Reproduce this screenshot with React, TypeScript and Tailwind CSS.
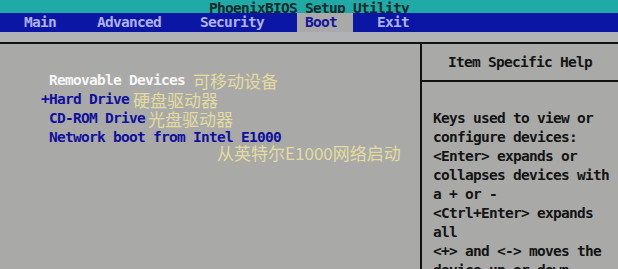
const tabs = [
  { label: "Main", className: "ml-[24px]" },
  { label: "Advanced", className: "ml-[41px]" },
  { label: "Security", className: "ml-[39px]" },
]

const bootItems = [
  { label: "Removable Devices", note: "可移动设备", active: true, pad: "pl-[8px]", gap: "ml-[8px]" },
  { label: "+Hard Drive", note: "硬盘驱动器", active: false, pad: "", gap: "ml-[4px]" },
  { label: "CD-ROM Drive", note: "光盘驱动器", active: false, pad: "pl-[8px]", gap: "ml-[3px]" },
  { label: "Network boot from Intel E1000", note: "", active: false, pad: "pl-[8px]", gap: "" },
]

const helpLines = [
  "Keys used to view or",
  "configure devices:",
  "<Enter> expands or",
  "collapses devices with",
  "a + or -",
  "<Ctrl+Enter> expands",
  "all",
  "<+> and <-> moves the",
  "device up or down.",
]

export default function App() {
  return (
    <div className="flex h-[269px] w-[618px] flex-col overflow-hidden bg-[#a9aaa8] font-['DejaVu_Sans_Mono',monospace] text-[14.5px] font-bold tracking-[-0.73px]">
      <div className="flex h-[13px] shrink-0 items-end justify-center overflow-hidden bg-[#1fa9a7] text-[#0f2a2a]">
        <span className="translate-y-[2px] leading-[13px]">PhoenixBIOS Setup Utility</span>
      </div>

      <div className="flex h-[19px] shrink-0 items-center bg-[#0b16a4] leading-[19px] text-[#aeb2f2]">
        {tabs.map((tab) => (
          <span key={tab.label} className={tab.className}>
            {tab.label}
          </span>
        ))}
        <span className="ml-[33px] h-full bg-[#a9aaa8] pl-[8px] pr-[16px] text-[#1414a0]">Boot</span>
        <span className="ml-[24px]">Exit</span>
      </div>

      <div className="h-[10px] shrink-0 bg-[#b1b2b6]" />
      <div className="h-[2px] shrink-0 bg-[#111111]" />

      <div className="flex min-h-0 flex-1 overflow-hidden">
        <div className="w-[420px] shrink-0 pl-[41px] pt-[27px] leading-[19px]">
          {bootItems.map((item) => (
            <div key={item.label} className={`flex items-center ${item.pad}`}>
              <span className={item.active ? "text-[#f6f6f6]" : "text-[#10109c]"}>{item.label}</span>
              {item.note && (
                <span className={`${item.gap} font-['Noto_Sans_CJK_SC',sans-serif] text-[17px] font-normal leading-[19px] tracking-normal text-[#e4dc9e]`}>
                  {item.note}
                </span>
              )}
            </div>
          ))}
          <div className="-mt-[4px] pl-[176px] font-['Noto_Sans_CJK_SC',sans-serif] text-[17px] font-normal leading-[19px] tracking-normal text-[#e4dc9e]">
            从英特尔E1000网络启动
          </div>
        </div>

        <div className="w-[2px] shrink-0 bg-[#111111]" />

        <div className="flex min-w-0 flex-1 flex-col text-[#141414]">
          <div className="flex h-[36px] shrink-0 items-center justify-center leading-[19px]">Item Specific Help</div>
          <div className="h-[2px] shrink-0 bg-[#111111]" />
          <div className="shrink-0 whitespace-pre pl-[11px] pt-[27px] leading-[19px]">
            {helpLines.map((line) => (
              <div key={line}>{line}</div>
            ))}
          </div>
        </div>
      </div>
    </div>
  )
}
